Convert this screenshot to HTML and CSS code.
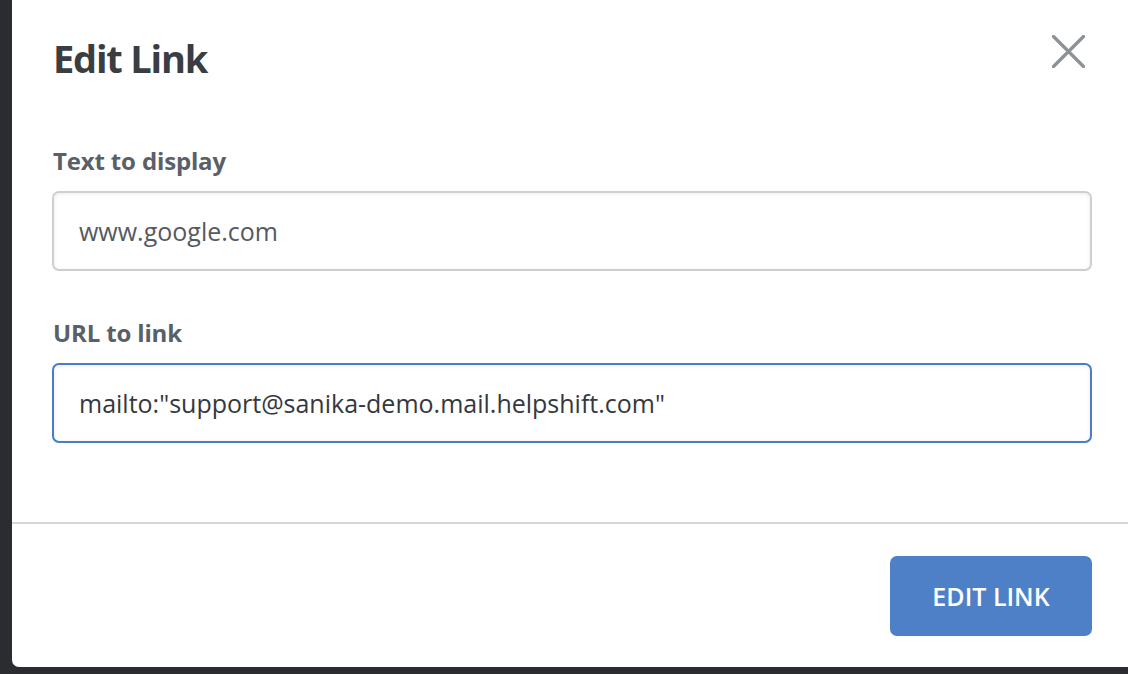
FILE: index.html
```html
<!DOCTYPE html>
<html>
<head>
<meta charset="utf-8">
<link rel="stylesheet" href="styles.css">
</head>
<body>
<div class="modal">
  <div class="modal-header">
    <h1 class="title">Edit Link</h1>
    <button class="close" aria-label="Close">
      <svg width="33" height="33" viewBox="0 0 33 33"><path d="M1.5 1.5 L31.5 31.5 M31.5 1.5 L1.5 31.5" stroke="#8a9197" stroke-width="3.2" stroke-linecap="round"/></svg>
    </button>
  </div>
  <div class="modal-body">
    <div class="field">
      <label class="label">Text to display</label>
      <div class="input">www.google.com</div>
    </div>
    <div class="field">
      <label class="label">URL to link</label>
      <div class="input focused">mailto:"support@sanika-demo.mail.helpshift.com"</div>
    </div>
  </div>
  <div class="modal-footer">
    <button class="btn">EDIT LINK</button>
  </div>
</div>
</body>
</html>
```

FILE: styles.css
```css
html, body {
  margin: 0;
  padding: 0;
  background: #2a2c30;
  height: 674px;
  overflow: hidden;
}
.modal {
  margin-left: 12px;
  width: 1116px;
  height: 667px;
  background: #ffffff;
  border-bottom-left-radius: 7px;
  font-family: "Open Sans", "Noto Sans", sans-serif;
  display: flex;
  flex-direction: column;
}
.modal-header {
  display: flex;
  justify-content: space-between;
  align-items: flex-start;
  padding: 34px 43px 0 41px;
  height: 100px;
  box-sizing: border-box;
}
.title {
  margin: 0;
  font-size: 38px;
  line-height: 48px;
  font-weight: 700;
  color: #3a3d42;
  letter-spacing: -1.2px;
}
.close {
  border: 0;
  background: none;
  padding: 0;
  margin-top: 1px;
  width: 33px;
  height: 33px;
  cursor: pointer;
}
.close svg { display: block; }
.modal-body {
  padding: 0 36px 0 40px;
  height: 424px;
  box-sizing: border-box;
  border-bottom: 2px solid #d6d6d6;
}
.field {
  display: flex;
  flex-direction: column;
  margin-bottom: 46px;
}
.label {
  font-size: 24px;
  font-weight: 700;
  line-height: 32px;
  color: #5a6068;
  letter-spacing: -0.15px;
  padding-left: 1px;
  margin-bottom: 14px;
  margin-top: 45px;
}
.field + .field .label { margin-top: 0; }
.input {
  height: 80px;
  box-sizing: border-box;
  border: 2px solid #cfcfcf;
  border-radius: 7px;
  padding: 0 25px;
  display: flex;
  align-items: center;
  font-size: 25px;
  color: #555a5f;
  letter-spacing: 0;
  box-shadow: inset 0 1px 4px rgba(0,0,0,0.08);
}
.input.focused {
  border-color: #4a7cc7;
  color: #35383c;
}
.modal-footer {
  display: flex;
  justify-content: flex-end;
  padding: 32px 36px 0 0;
}
.btn {
  width: 202px;
  height: 80px;
  border: 0;
  border-radius: 7px;
  background: #4e80c8;
  color: #ffffff;
  font-family: "Open Sans", "Noto Sans", sans-serif;
  font-size: 25px;
  font-weight: 600;
  letter-spacing: 0;
}
```
